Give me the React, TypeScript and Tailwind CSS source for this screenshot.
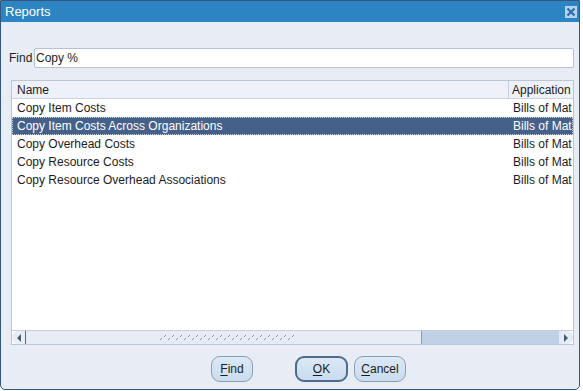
import React from "react";

const rows = [
  "Copy Item Costs",
  "Copy Item Costs Across Organizations",
  "Copy Overhead Costs",
  "Copy Resource Costs",
  "Copy Resource Overhead Associations",
];

function Grip() {
  const dots = [];
  for (let i = 0; i < 17; i++) {
    const x = i * 8;
    dots.push(<rect key={"a" + i} x={x} y={7} width={1} height={1} fill="#8797ab" />);
    dots.push(<rect key={"b" + i} x={x + 1} y={6} width={1} height={1} fill="#8797ab" />);
    dots.push(<rect key={"c" + i} x={x + 4} y={4} width={1} height={1} fill="#8797ab" />);
    dots.push(<rect key={"d" + i} x={x + 5} y={3} width={1} height={1} fill="#8797ab" />);
  }
  return (
    <svg width="136" height="10" className="absolute left-[134px] top-[1px]">
      {dots}
    </svg>
  );
}

function Btn({ label, mn, def, w }: { label: string; mn: number; def?: boolean; w: string }) {
  return (
    <button
      className={`${w} h-[26px] rounded-[9px] bg-gradient-to-b from-[#dce8f5] to-[#c9dcef] text-[12px] text-[#1c1c1c] flex items-center justify-center ${
        def ? "border-2 border-[#4f6a8c]" : "border border-[#8c9cb0]"
      }`}
    >
      {label.slice(0, mn)}
      <span className="underline underline-offset-2">{label[mn]}</span>
      {label.slice(mn + 1)}
    </button>
  );
}

export default function App() {
  return (
    <div className="w-[583px] h-[391px] bg-white" style={{ fontFamily: '"Liberation Sans", Arial, sans-serif' }}>
      <div className="w-[580px] h-[390px] border border-[#35567c] rounded-b-[5px] bg-[#e8edf5] flex flex-col overflow-hidden">
        {/* title bar */}
        <div className="h-[21px] bg-[#2c84c3] flex items-center justify-between pl-[4px] pr-[2px] shrink-0">
          <span className="text-white text-[13px] leading-none">Reports</span>
          <div className="w-[12px] h-[12px] bg-[#b6d2ec] flex items-center justify-center">
            <svg width="10" height="10" viewBox="0 0 10 10">
              <path d="M1.5 1.5 L8.5 8.5 M8.5 1.5 L1.5 8.5" stroke="#2b6cae" strokeWidth="2.2" />
            </svg>
          </div>
        </div>

        {/* find row */}
        <div className="flex items-center pl-[8px] pr-[5px] mt-[26px] h-[20px] text-[12px] text-[#1c1c1c]">
          <span className="w-[25px]">Find</span>
          <div className="flex-1 h-[20px] bg-white border border-[#b4c2d4] rounded-[2px] flex items-center pl-[1px]">
            Copy %
          </div>
        </div>

        {/* list */}
        <div className="ml-[10px] mt-[12px] w-[563px] h-[265px] border border-[#b8c6d8] bg-white flex flex-col text-[12px] text-[#1c1c1c]">
          <div className="h-[18px] flex bg-[#eef2f8] border-b border-[#c8d3e1] shrink-0">
            <div className="w-[496px] pl-[5px] flex items-center">Name</div>
            <div className="flex-1 pl-[3px] flex items-center border-l border-[#c3cfdf] overflow-hidden whitespace-nowrap">
              Application
            </div>
          </div>
          {rows.map((r, i) => (
            <div
              key={r}
              className={`h-[18px] flex items-center shrink-0 ${
                i === 1 ? "bg-[#466189] text-white outline-1 outline-dotted outline-[#c7d2e0] -outline-offset-1" : ""
              }`}
            >
              <div className="w-[497px] pl-[5px]">{r}</div>
              <div className="flex-1 pl-[4px] overflow-hidden whitespace-nowrap">Bills of Mat</div>
            </div>
          ))}
          <div className="flex-1" />
          {/* horizontal scrollbar */}
          <div className="h-[14px] flex shrink-0 border-t border-[#c3cfdf]">
            <div className="w-[14px] bg-[#e9eef6] border-r border-[#5a6b80] rounded-l-[6px] flex items-center justify-center">
              <svg width="6" height="8" viewBox="0 0 6 8">
                <path d="M5 0 L1 4 L5 8 Z" fill="#4a5a70" />
              </svg>
            </div>
            <div className="w-[396px] bg-[#e8edf5] relative border-r border-[#8a9ab0]">
              <Grip />
            </div>
            <div className="flex-1 bg-[#c0d1e6]" />
            <div className="w-[14px] bg-[#e4ebf4] rounded-r-[6px] flex items-center justify-center">
              <svg width="6" height="8" viewBox="0 0 6 8">
                <path d="M1 0 L5 4 L1 8 Z" fill="#4a5a70" />
              </svg>
            </div>
          </div>
        </div>

        {/* buttons */}
        <div className="flex mt-[11px] pl-[210px] items-center">
          <Btn label="Find" mn={0} w="w-[42px]" />
          <div className="w-[42px]" />
          <Btn label="OK" mn={0} def w="w-[53px]" />
          <div className="w-[6px]" />
          <Btn label="Cancel" mn={0} w="w-[52px]" />
        </div>
      </div>
    </div>
  );
}
